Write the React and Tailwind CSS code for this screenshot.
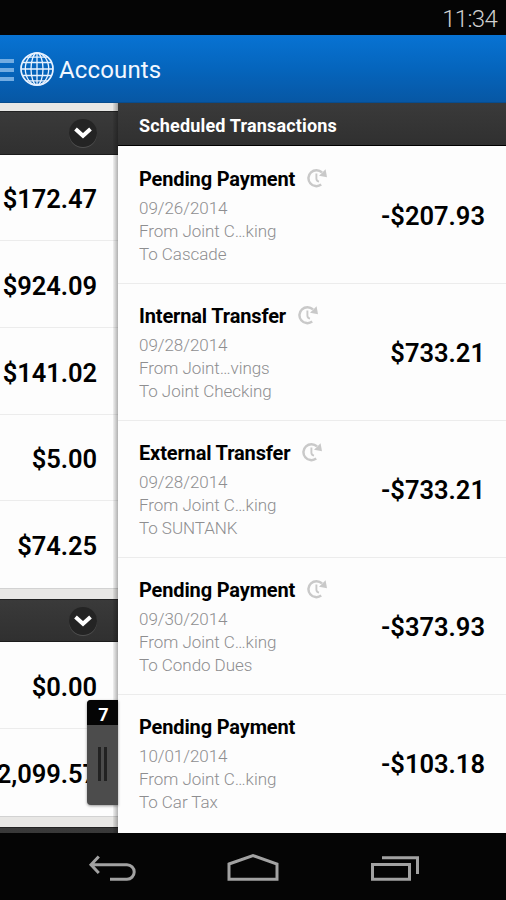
import React from "react";

const groups = [
  { rows: ["$172.47", "$924.09", "$141.02", "$5.00", "$74.25"] },
  { rows: ["$0.00", "2,099.57"] },
];

const transactions = [
  { title: "Pending Payment", date: "09/26/2014", from: "Joint C…king", to: "Cascade", amount: "-$207.93", recurring: true },
  { title: "Internal Transfer", date: "09/28/2014", from: "Joint…vings", to: "Joint Checking", amount: "$733.21", recurring: true },
  { title: "External Transfer", date: "09/28/2014", from: "Joint C…king", to: "SUNTANK", amount: "-$733.21", recurring: true },
  { title: "Pending Payment", date: "09/30/2014", from: "Joint C…king", to: "Condo Dues", amount: "-$373.93", recurring: true },
  { title: "Pending Payment", date: "10/01/2014", from: "Joint C…king", to: "Car Tax", amount: "-$103.18", recurring: false },
];

function Globe() {
  return (
    <svg className="ml-1.5 h-[34px] w-[34px] shrink-0" viewBox="0 0 34 34" fill="none" stroke="#e8f2ff" strokeWidth="1.3">
      <circle cx="17" cy="17" r="16" strokeWidth="1.7" />
      <ellipse cx="17" cy="17" rx="6" ry="16" />
      <ellipse cx="17" cy="17" rx="11.7" ry="16" />
      <path d="M17 1v32M1 17h32M2.5 10.5h29M2.5 23.5h29M6.5 5.2h21M6.5 28.8h21" />
    </svg>
  );
}

function RecurringIcon() {
  return (
    <svg className="relative -top-px ml-3 h-5 w-5" viewBox="0 0 20 20" fill="none">
      <path d="M14.2 16.6A8 8 0 1 1 15 4.4" stroke="#c9c9c9" strokeWidth="2.5" />
      <path d="M18.6 1.2L20 9.2L12 7.8Z" fill="#c9c9c9" />
      <path d="M9.4 5.4V10.8Q9.4 13 12 13.6" stroke="#c9c9c9" strokeWidth="1.9" />
    </svg>
  );
}

// dark bar on top of each account group
function GroupHeader() {
  return (
    <div className="flex h-[43.5px] shrink-0 items-center justify-end border-y border-t-[#222] border-b-[#1c1c1c] bg-linear-to-b from-[#3a3a3a] to-[#303030] pr-[21px]">
      <div className="flex h-7 w-7 items-center justify-center rounded-full bg-[#242424] shadow-[0_1px_0_#505050]">
        <svg className="h-3 w-[18px]" viewBox="0 0 18 12" fill="none">
          <path d="M1.5 2L9 8.8L16.5 2" stroke="#fff" strokeWidth="4" />
        </svg>
      </div>
    </div>
  );
}

function AccountGroup({ rows }) {
  return (
    <section className="shrink-0">
      <GroupHeader />
      <div className="border-b border-[#d2d2d2] bg-[#fdfdfd]">
        {rows.map((value) => (
          <div
            key={value}
            className="flex h-[86.7px] items-center justify-end border-b border-[#ececec] pt-1 pr-[21px] text-[25.5px] font-semibold tracking-[-0.05px] text-black last:border-b-0"
          >
            {value}
          </div>
        ))}
      </div>
    </section>
  );
}

function Transaction({ item }) {
  return (
    <div className="flex h-[137px] shrink-0 items-start justify-between border-t border-[#ececec] pr-[21px] pl-[21px] first-of-type:border-transparent">
      <div className="pt-[19px]">
        <div className="flex h-[26px] items-center">
          <span className="text-xl font-bold tracking-[-0.15px] text-black">{item.title}</span>
          {item.recurring && <RecurringIcon />}
        </div>
        <div className="mt-[5px] text-[17px] leading-[23px] font-light tracking-[-0.05px] text-[#8e8e90]">
          <p>{item.date}</p>
          <p>From {item.from}</p>
          <p>To {item.to}</p>
        </div>
      </div>
      <span className="pt-[51px] text-[25.5px] leading-9 font-semibold text-black">{item.amount}</span>
    </div>
  );
}

function DrawerHandle() {
  return (
    <div className="absolute top-[597px] left-[87px] h-[105px] w-[31px] overflow-hidden rounded-l bg-[#4c4c4c] shadow-[0_1px_3px_rgba(0,0,0,0.4)]">
      <div className="flex h-[25px] items-center justify-center bg-[#050505] pt-1 pl-0.5 text-lg font-bold text-white">7</div>
      <div className="mt-[22px] flex justify-center gap-[3px]">
        <i className="h-[34px] w-[3px] bg-[#222]" />
        <i className="h-[34px] w-[3px] bg-[#222]" />
      </div>
    </div>
  );
}

function NavBar() {
  return (
    <nav className="flex h-[67px] shrink-0 bg-[#050505]">
      <svg className="h-[67px] w-full" viewBox="0 0 506 67" fill="none" stroke="#a2a2a2" strokeWidth="3">
        <path d="M91 31.8H127A7.2 7.2 0 0 1 127 46.2H110M98.8 23.5L91 31.8L98.8 40" />
        <path d="M229 31L253 22.5L277 31V46.2H229Z" />
        <path d="M372.5 31.5H409.5V46.2H372.5ZM382 24.8H417.5V41" />
      </svg>
    </nav>
  );
}

export default function App() {
  return (
    <div className="flex h-[900px] w-[506px] flex-col overflow-hidden bg-[#050505] font-['Roboto',sans-serif]">
      <div className="flex h-[35px] shrink-0 items-center justify-end pt-0.5 pr-[9px] text-2xl font-light tracking-[-0.7px] text-[#d0d0d0]">
        11:34
      </div>

      <header className="flex h-[68px] shrink-0 items-center border-b border-[#084c8d] bg-linear-to-b from-[#0873d3] via-[#0565bd] to-[#0757a4]">
        <div className="flex w-3.5 flex-col gap-[5px] pt-0.5">
          <i className="h-1 bg-[#72ace2]" />
          <i className="h-1 bg-[#72ace2]" />
          <i className="h-1 bg-[#72ace2]" />
        </div>
        <Globe />
        <h1 className="ml-[5px] pt-0.5 text-2xl tracking-[0.15px] text-[#f2f7ff]">Accounts</h1>
      </header>

      <main className="relative flex h-[730px] shrink-0">
        <div className="relative flex w-[118px] shrink-0 flex-col gap-[10px] overflow-hidden bg-[#e8e7e5] pt-2">
          {groups.map((group, i) => (
            <AccountGroup key={i} rows={group.rows} />
          ))}
          <GroupHeader />
          <div className="absolute inset-y-0 right-0 w-[5px] bg-linear-to-r from-black/5 to-black/30" />
        </div>

        <div className="flex min-w-0 flex-1 flex-col overflow-hidden bg-[#fdfdfd]">
          <h2 className="flex h-[43px] shrink-0 items-center border-b border-black bg-linear-to-b from-[#3a3a3a] to-[#303030] pt-[3px] pl-[21px] text-lg font-bold tracking-[0.17px] text-white">
            Scheduled Transactions
          </h2>
          {transactions.map((item) => (
            <Transaction key={item.date + item.to} item={item} />
          ))}
        </div>
        <DrawerHandle />
      </main>

      <NavBar />
    </div>
  );
}
